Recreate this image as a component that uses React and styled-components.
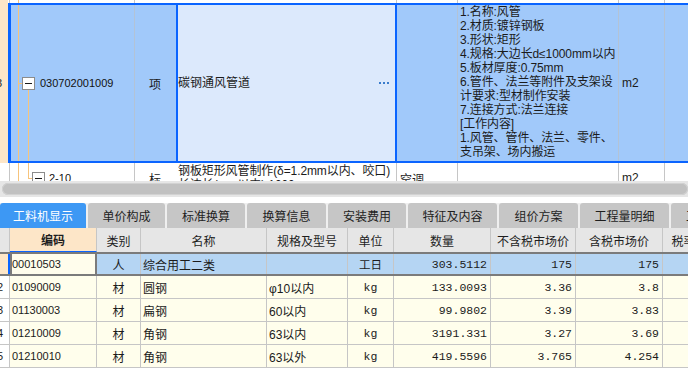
import React from 'react';
import styled, { createGlobalStyle, css } from 'styled-components';

const BLUE = '#0a64ff';
const ORANGE = '#f7c47c';
const PEACH = '#fde6c8';
const SEL = '#a1c9fa';
const CUR = '#dce9fc';
const GRID = '#c6c6c6';
const ROWSEL = '#b5d5f3';
const YEL = '#fffeec';
const FRAME = '#7b7b7b';

const GlobalStyle = createGlobalStyle`
  * { box-sizing: border-box; }
  html, body { margin: 0; padding: 0; background: #fff; overflow: hidden; }
  body {
    font-family: "Liberation Sans", "Noto Sans CJK SC", sans-serif;
    font-size: 12px;
    color: #1b1b1b;
  }
`;

const Page = styled.div`
  width: 688px;
  height: 369px;
  overflow: hidden;
  display: flex;
  flex-direction: column;
  background: #fff;
`;

/* ---------- upper grid ---------- */
const TopPane = styled.div`
  height: 181px;
  flex: none;
  overflow: hidden;
  display: flex;
  flex-direction: column;
`;

const TopRow = styled.div`
  display: flex;
  flex: none;
  height: ${p => p.$h}px;
`;

const RowHead = styled.div`
  width: 8px;
  flex: none;
  background: ${p => (p.$peach ? PEACH : '#fff')};
  display: flex;
  align-items: center;
  justify-content: flex-end;
  overflow: hidden;
  padding-right: 6px;
  font-size: 11px;
`;

const TopBody = styled.div`
  flex: 1;
  min-width: 0;
  display: grid;
  grid-template-columns: 124px 41px 221px 61px 161px 46px 40px;
  overflow: hidden;
  ${p =>
    p.$sel
      ? css`
          background: ${SEL};
          border-top: 2px solid ${BLUE};
          border-bottom: 2px solid ${BLUE};
          border-left: 3px solid ${BLUE};
        `
      : css`
          background: #fff;
          border-left: 1px solid #fff;
          padding-left: 2px;
          box-shadow: inset 1px 0 0 ${GRID};
        `}
`;

const TCell = styled.div`
  min-width: 0;
  overflow: hidden;
  white-space: nowrap;
  display: flex;
  align-items: ${p => (p.$top ? 'flex-start' : 'center')};
  justify-content: ${p => (p.$center ? 'center' : 'flex-start')};
  padding-left: ${p => p.$pl || 0}px;
  border-right: 1px solid ${p => p.$sep || 'transparent'};
`;

const CodeCell = styled(TCell)`
  align-items: stretch;
  ${p =>
    p.$strip &&
    css`
      background: linear-gradient(${ORANGE}, ${ORANGE}) 7px 0 / 1px 100% no-repeat;
    `}
`;

const Gutter = styled.div`
  flex: none;
  width: ${p => (p.$level === 2 ? 21 : 11)}px;
  background: ${p =>
    p.$level === 2
      ? `linear-gradient(${ORANGE}, ${ORANGE}) 7px 0 / 1px 100% no-repeat,
         linear-gradient(${ORANGE}, ${ORANGE}) 17px 0 / 1px 50% no-repeat,
         linear-gradient(${ORANGE}, ${ORANGE}) 17px 50% / 4px 1px no-repeat`
      : `linear-gradient(${ORANGE}, ${ORANGE}) 7px 0 / 1px 100% no-repeat,
         linear-gradient(${ORANGE}, ${ORANGE}) 7px 50% / 4px 1px no-repeat`};
`;

const BoxCol = styled.div`
  flex: none;
  width: 13px;
  display: flex;
  flex-direction: column;
`;

const Stem = styled.div`
  flex: 1;
  background: ${p =>
    p.$line ? `linear-gradient(${ORANGE}, ${ORANGE}) 6px 0 / 1px 100% no-repeat` : 'none'};
`;

const Toggle = styled.div`
  flex: none;
  width: 13px;
  height: 13px;
  border: 1px solid #8c8c8c;
  background: #fff;
  display: flex;
  align-items: center;
  justify-content: center;
  &::after {
    content: '';
    width: 7px;
    height: 1px;
    background: #1b1b1b;
  }
`;

const CodeText = styled.span`
  align-self: center;
  margin-left: ${p => p.$ml}px;
  font-size: 11px;
  color: #111;
`;

const NameCell = styled(TCell)`
  border-left: 2px solid ${p => (p.$sel ? BLUE : 'transparent')};
  border-right: ${p => (p.$sel ? `2px solid ${BLUE}` : `1px solid ${GRID}`)};
  background: ${p => (p.$sel ? CUR : 'transparent')};
  justify-content: space-between;
  padding-right: ${p => (p.$sel ? 6 : 0)}px;
  padding-top: ${p => (p.$top ? 1 : 0)}px;
  line-height: 14px;
`;

const NameLines = styled.div`
  display: flex;
  flex-direction: column;
  min-width: 0;
  white-space: nowrap;
  letter-spacing: -0.1px;
`;

const Dots = styled.span`
  display: flex;
  gap: 2px;
  span {
    width: 2px;
    height: 2px;
    background: #3a7ccc;
  }
`;

const Desc = styled.div`
  line-height: 14px;
  font-size: 12px;
  white-space: nowrap;
  letter-spacing: -0.1px;
`;

/* ---------- scrollbar ---------- */
const HScroll = styled.div`
  flex: none;
  height: 16px;
  margin-bottom: 6px;
  background: #e6e6e6;
  padding: 2px 0 2px 2px;
`;

const Thumb = styled.div`
  height: 12px;
  border-radius: 6px;
  background: #c1c1c1;
  box-shadow: inset 0 0 0 1px #d2d2d2;
`;

/* ---------- tabs ---------- */
const TabBar = styled.div`
  flex: none;
  display: flex;
  gap: 2px;
  height: 25px;
  background: #efefef;
  overflow: hidden;
`;

const Tab = styled.div`
  flex: none;
  width: ${p => p.$w}px;
  border-radius: 3px 3px 0 0;
  background: ${p => (p.$active ? '#3d98f4' : '#c6c6c6')};
  color: ${p => (p.$active ? '#fff' : '#1e1e1e')};
  display: flex;
  align-items: center;
  justify-content: ${p => (p.$left ? 'flex-start' : 'center')};
  padding-left: ${p => (p.$left ? 15 : 0)}px;
  font-size: 12px;
  white-space: nowrap;
  overflow: hidden;
`;

/* ---------- lower table ---------- */
const COLS = '10px 87px 44px 126px 81px 46px 97px 85px 87px 42px';

const Table = styled.div`
  flex: 1;
  overflow: hidden;
  background: #fff;
`;

const HeadRow = styled.div`
  display: grid;
  grid-template-columns: ${COLS};
  height: 24px;
  background: #e6e6e6;
`;

const HCell = styled.div`
  border-right: 1px solid ${GRID};
  display: flex;
  align-items: center;
  justify-content: center;
  white-space: nowrap;
  overflow: hidden;
  font-size: 12px;
  color: #1e1e1e;
  ${p =>
    p.$cur &&
    css`
      background: ${PEACH};
      font-weight: 700;
      border-bottom: 1px solid ${BLUE};
    `}
`;

const DataRow = styled.div`
  display: grid;
  grid-template-columns: ${COLS};
  height: ${p => (p.$sel ? 24 : 23)}px;
  background: ${p => (p.$sel ? ROWSEL : YEL)};
  ${p =>
    p.$sel
      ? css`
          border-top: 2px solid ${FRAME};
          border-bottom: 2px solid ${FRAME};
        `
      : css`
          border-bottom: 1px solid ${GRID};
        `}
`;

const RowNum = styled.div`
  display: flex;
  align-items: center;
  justify-content: flex-end;
  overflow: hidden;
  padding-right: 6px;
  font-size: 11px;
  background: ${p => (p.$sel ? PEACH : '#fff')};
  border-right: ${p => (p.$sel ? `2px solid ${BLUE}` : `1px solid ${GRID}`)};
`;

const DCell = styled.div`
  min-width: 0;
  overflow: hidden;
  white-space: nowrap;
  display: flex;
  align-items: center;
  justify-content: ${p => (p.$align === 'center' ? 'center' : p.$align === 'right' ? 'flex-end' : 'flex-start')};
  padding-left: ${p => (p.$align === 'left' ? 2 : 0)}px;
  padding-right: ${p => (p.$align === 'right' ? 3 : 0)}px;
  border-right: 1px solid ${GRID};
  font-size: 12px;
  ${p =>
    p.$mono &&
    css`
      font-family: "Liberation Mono", "Noto Sans CJK SC", monospace;
      font-size: 11.5px;
    `}
`;

const CodeDCell = styled(DCell)`
  font-size: 11px;
  ${p =>
    p.$focus &&
    css`
      background: #fffdec;
      border-left: 2px solid ${FRAME};
      border-right: 2px solid ${FRAME};
      padding-left: 0;
    `}
`;

const descLines = [
  '1.名称:风管',
  '2.材质:镀锌钢板',
  '3.形状:矩形',
  '4.规格:大边长d≤1000mm以内',
  '5.板材厚度:0.75mm',
  '6.管件、法兰等附件及支架设',
  '计要求:型材制作安装',
  '7.连接方式:法兰连接',
  '[工作内容]',
  '1.风管、管件、法兰、零件、',
  '支吊架、场内搬运',
];

const tabs = [
  ['工料机显示', 86],
  ['单价构成', 77],
  ['标准换算', 78],
  ['换算信息', 79],
  ['安装费用', 78],
  ['特征及内容', 89],
  ['组价方案', 79],
  ['工程量明细', 89],
  ['工作内容', 60],
];

const headers = ['编码', '类别', '名称', '规格及型号', '单位', '数量', '不含税市场价', '含税市场价', '税率'];

const rows = [
  { code: '00010503', type: '人', name: '综合用工二类', spec: '', unit: '工日', qty: '303.5112', p1: '175', p2: '175' },
  { code: '01090009', type: '材', name: '圆钢', spec: 'φ10以内', unit: 'kg', qty: '133.0093', p1: '3.36', p2: '3.8' },
  { code: '01130003', type: '材', name: '扁钢', spec: '60以内', unit: 'kg', qty: '99.9802', p1: '3.39', p2: '3.83' },
  { code: '01210009', type: '材', name: '角钢', spec: '63以内', unit: 'kg', qty: '3191.331', p1: '3.27', p2: '3.69' },
  { code: '01210010', type: '材', name: '角钢', spec: '63以外', unit: 'kg', qty: '419.5596', p1: '3.765', p2: '4.254' },
];

const SEP_SEL = '#b3c3d6';

export default function App() {
  return (
    <Page>
      <GlobalStyle />
      <TopPane>
        <TopRow $h={3}>
          <RowHead $peach />
          <TopBody>
            <CodeCell $strip $sep={GRID} />
            <TCell />
            <NameCell />
            <TCell $sep={GRID} />
            <TCell $sep={GRID} />
            <TCell $sep={GRID} />
            <TCell />
          </TopBody>
        </TopRow>

        <TopRow $h={160}>
          <RowHead $peach>3</RowHead>
          <TopBody $sel>
            <CodeCell $sep={SEP_SEL}>
              <Gutter $level={1} />
              <BoxCol>
                <Stem />
                <Toggle />
                <Stem $line />
              </BoxCol>
              <CodeText $ml={5}>030702001009</CodeText>
            </CodeCell>
            <TCell $center>项</TCell>
            <NameCell $sel>
              <span>碳钢通风管道</span>
              <Dots>
                <span />
                <span />
                <span />
              </Dots>
            </NameCell>
            <TCell $sep={SEP_SEL} />
            <TCell $sep={SEP_SEL} $top $pl={2}>
              <Desc>
                {descLines.map((l, i) => (
                  <div key={i}>{l}</div>
                ))}
              </Desc>
            </TCell>
            <TCell $sep={SEP_SEL} $pl={3}>m2</TCell>
            <TCell />
          </TopBody>
        </TopRow>

        <TopRow $h={30}>
          <RowHead />
          <TopBody>
            <CodeCell $sep={GRID}>
              <Gutter $level={2} />
              <BoxCol>
                <Stem />
                <Toggle />
                <Stem />
              </BoxCol>
              <CodeText $ml={4}>2-10</CodeText>
            </CodeCell>
            <TCell $center>标</TCell>
            <NameCell $top>
              <NameLines>
                <span>钢板矩形风管制作(δ=1.2mm以内、咬口)</span>
                <span>长边长(mm以内) 1000</span>
              </NameLines>
            </NameCell>
            <TCell $sep={GRID} $pl={3}>空调</TCell>
            <TCell $sep={GRID} />
            <TCell $sep={GRID} $pl={3}>m2</TCell>
            <TCell />
          </TopBody>
        </TopRow>
      </TopPane>

      <HScroll>
        <Thumb />
      </HScroll>

      <TabBar>
        {tabs.map(([label, w], i) => (
          <Tab key={label} $w={w} $active={i === 0} $left={i === tabs.length - 1}>
            {label}
          </Tab>
        ))}
      </TabBar>

      <Table>
        <HeadRow>
          <HCell />
          {headers.map((h, i) => (
            <HCell key={h} $cur={i === 0}>
              {h}
            </HCell>
          ))}
        </HeadRow>
        {rows.map((r, i) => {
          const sel = i === 0;
          return (
            <DataRow key={r.code} $sel={sel}>
              <RowNum $sel={sel}>{sel ? '' : i + 1}</RowNum>
              <CodeDCell $align="left" $focus={sel}>
                {r.code}
              </CodeDCell>
              <DCell $align="center">{r.type}</DCell>
              <DCell $align="left">{r.name}</DCell>
              <DCell $align="left">{r.spec}</DCell>
              <DCell $align="center" $mono>
                {r.unit}
              </DCell>
              <DCell $align="right" $mono>
                {r.qty}
              </DCell>
              <DCell $align="right" $mono>
                {r.p1}
              </DCell>
              <DCell $align="right" $mono>
                {r.p2}
              </DCell>
              <DCell $align="right" />
            </DataRow>
          );
        })}
      </Table>
    </Page>
  );
}
